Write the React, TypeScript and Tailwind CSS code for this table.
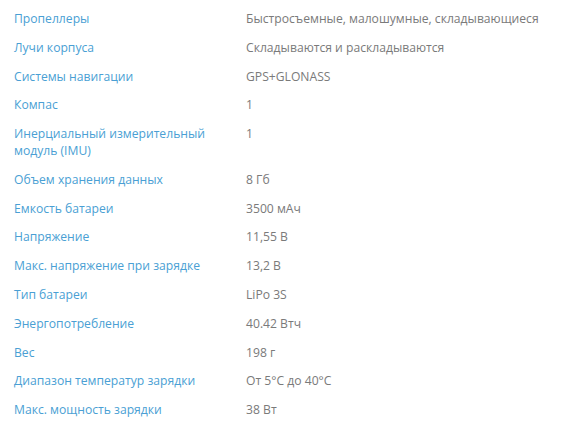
import React from "react";

const rows: [string, string][] = [
  ["Пропеллеры", "Быстросъемные, малошумные, складывающиеся"],
  ["Лучи корпуса", "Складываются и раскладываются"],
  ["Системы навигации", "GPS+GLONASS"],
  ["Компас", "1"],
  ["Инерциальный измерительный модуль (IMU)", "1"],
  ["Объем хранения данных", "8 Гб"],
  ["Емкость батареи", "3500 мАч"],
  ["Напряжение", "11,55 В"],
  ["Макс. напряжение при зарядке", "13,2 В"],
  ["Тип батареи", "LiPo 3S"],
  ["Энергопотребление", "40.42 Втч"],
  ["Вес", "198 г"],
  ["Диапазон температур зарядки", "От 5°C до 40°C"],
  ["Макс. мощность зарядки", "38 Вт"],
];

export default function App() {
  return (
    <div
      className="w-[564px] h-[425px] bg-white pt-[5px] pl-[14px] overflow-hidden"
      style={{ fontFamily: '"Open Sans", "Noto Sans", sans-serif' }}
    >
      <div className="flex flex-col">
        {rows.map(([k, v], i) => (
          <div key={i} className="flex py-[6px] text-[12.15px] leading-[16.8px]">
            <div className="w-[232px] pr-[20px] text-[#4a9fd4]">{k}</div>
            <div className="text-[#7a7a7a]">{v}</div>
          </div>
        ))}
      </div>
    </div>
  );
}
